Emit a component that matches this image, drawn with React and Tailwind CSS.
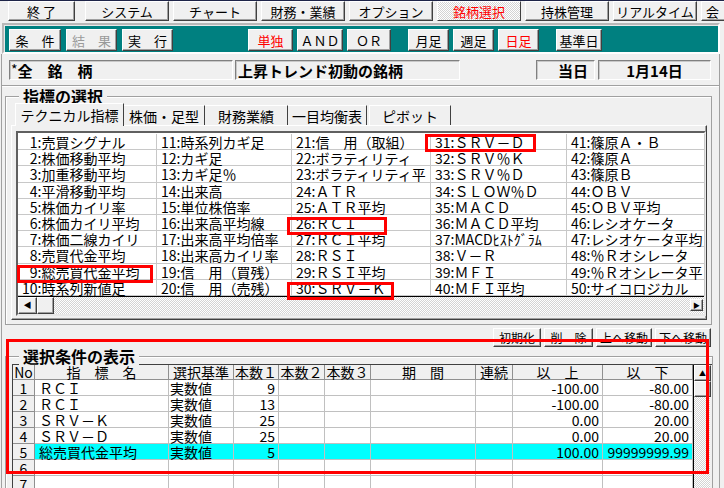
import React from 'react';

const raised =
  'shrink-0 bg-[#f0f0f0] border border-t-white border-l-white border-r-[#404040] border-b-[#404040] shadow-[inset_-1px_-1px_0_#a0a0a0]';
const sunken =
  'shrink-0 border border-t-[#808080] border-l-[#808080] border-r-white border-b-white shadow-[inset_1px_1px_0_#c8c8c8]';
const dither =
  'bg-[image:repeating-conic-gradient(#ffffff_0_25%,#d4d4d4_0_50%)] bg-[length:2px_2px]';

const menuItems = ['システム', 'チャート', '財務・業績', 'オプション'];
const menuItems2 = ['持株管理', 'リアルタイム'];

const listCols = [
  ['1:売買シグナル', '2:株価移動平均', '3:加重移動平均', '4:平滑移動平均', '5:株価カイリ率', '6:株価カイリ平均', '7:株価二線カイリ', '8:売買代金平均', '9:総売買代金平均', '10:時系列新値足'],
  ['11:時系列カギ足', '12:カギ足', '13:カギ足％', '14:出来高', '15:単位株倍率', '16:出来高平均線', '17:出来高平均倍率', '18:出来高カイリ率', '19:信　用（買残）', '20:信　用（売残）'],
  ['21:信　用（取組）', '22:ボラティリティ', '23:ボラティリティ平', '24:ＡＴＲ', '25:ＡＴＲ平均', '26:ＲＣＩ', '27:ＲＣＩ平均', '28:ＲＳＩ', '29:ＲＳＩ平均', '30:ＳＲＶ－Ｋ'],
  ['31:ＳＲＶ－Ｄ', '32:ＳＲＶ％Ｋ', '33:ＳＲＶ％Ｄ', '34:ＳＬＯＷ％Ｄ', '35:ＭＡＣＤ', '36:ＭＡＣＤ平均', '37:MACDﾋｽﾄｸﾞﾗﾑ', '38:Ｖ－Ｒ', '39:ＭＦＩ', '40:ＭＦＩ平均'],
  ['41:篠原Ａ・Ｂ', '42:篠原Ａ', '43:篠原Ｂ', '44:ＯＢＶ', '45:ＯＢＶ平均', '46:レシオケータ', '47:レシオケータ平均', '48:％Ｒオシレータ', '49:％Ｒオシレータ平', '50:サイコロジカル'],
];

const headers = ['No', '指　標　名', '選択基準', '本数１', '本数２', '本数３', '期　間', '連続', '以　上', '以　下'];

const rows = [
  { no: 1, name: 'ＲＣＩ', kind: '実数値', n1: '9', lo: '-100.00', hi: '-80.00' },
  { no: 2, name: 'ＲＣＩ', kind: '実数値', n1: '13', lo: '-100.00', hi: '-80.00' },
  { no: 3, name: 'ＳＲＶ－Ｋ', kind: '実数値', n1: '25', lo: '0.00', hi: '20.00' },
  { no: 4, name: 'ＳＲＶ－Ｄ', kind: '実数値', n1: '25', lo: '0.00', hi: '20.00' },
  { no: 5, name: '総売買代金平均', kind: '実数値', n1: '5', lo: '100.00', hi: '99999999.99', sel: true },
  { no: 6 },
  { no: 7 },
];

function Btn({ children, className = '' }) {
  return <div className={`flex items-center justify-center whitespace-nowrap ${raised} ${className}`}>{children}</div>;
}

function ListLabel({ text, first }) {
  const i = text.indexOf(':');
  const num = text.slice(0, i);
  return (
    <>
      {first && num.length === 1 && <span className="invisible">0</span>}
      {num}:{text.slice(i + 1)}
    </>
  );
}

export default function App() {
  return (
    <div className="relative w-[724px] h-[488px] overflow-hidden bg-[#f0f0f0] text-black font-['Noto_Sans_CJK_JP',sans-serif]">
      <div className="h-[1px] bg-[#1e2448]" />

      {/* Menu bar */}
      <div className="flex h-[21px] pl-[8px] gap-[4px] items-start text-[13px] leading-none">
        <Btn className="w-[67px] h-[20px] mr-[6px]">終 了</Btn>
        {menuItems.map((m) => (
          <Btn key={m} className="w-[84px] h-[20px]">{m}</Btn>
        ))}
        <div className={`shrink-0 w-[84px] h-[20px] flex items-center justify-center text-[#ff0000] border border-t-white border-l-white border-r-[#404040] border-b-[#404040] ${dither}`}>
          銘柄選択
        </div>
        {menuItems2.map((m) => (
          <Btn key={m} className="w-[84px] h-[20px]">{m}</Btn>
        ))}
        <Btn className="w-[84px] h-[20px] justify-start pl-[4px]">会</Btn>
      </div>

      {/* Teal tool bar */}
      <div className="ml-[2px] mt-[1px] w-[718px] h-[31px] border-2 border-t-[#b8b8b8] border-l-[#b8b8b8] border-r-white border-b-white bg-[#008080] shadow-[inset_1px_1px_0_#e8e8e8]">
        <div className="flex items-start pt-[4px] pl-[5px] text-[13px] leading-none">
          <Btn className="w-[52px] h-[22px]">条　件</Btn>
          <Btn className="w-[51px] h-[22px] ml-[5px] text-[#9a9a9a]">結　果</Btn>
          <Btn className="w-[51px] h-[22px] ml-[5px]">実　行</Btn>
          <Btn className="w-[45px] h-[22px] ml-[75px] text-[#ff0000]">単独</Btn>
          <Btn className="w-[46px] h-[22px] ml-[4px]">ＡＮＤ</Btn>
          <Btn className="w-[44px] h-[22px] ml-[4px]">ＯＲ</Btn>
          <Btn className="w-[41px] h-[22px] ml-[17px]">月足</Btn>
          <Btn className="w-[41px] h-[22px] ml-[4px]">週足</Btn>
          <Btn className="w-[41px] h-[22px] ml-[4px] text-[#ff0000]">日足</Btn>
          <Btn className="w-[46px] h-[22px] ml-[17px]">基準日</Btn>
        </div>
      </div>

      {/* Main area */}
      <div className="ml-[1px] w-[719px] h-[434px] border-l border-r border-[#a0a0a0]">
        {/* Selected info row */}
        <div className="flex items-start pt-[6px] text-[15px] font-bold leading-none">
          <div className={`${sunken} ml-[7px] w-[224px] h-[20px] flex items-center pl-[1px] whitespace-nowrap`}>
            <span className="text-[14px] font-normal self-start mt-[1px]">*</span>全　銘　柄
          </div>
          <div className={`${sunken} ml-[2px] w-[225px] h-[20px] flex items-center pl-[2px] whitespace-nowrap`}>
            上昇トレンド初動の銘柄
          </div>
          <div className={`${sunken} ml-[76px] w-[59px] h-[20px] flex items-center justify-end pr-[6px]`}>当日</div>
          <div className={`${sunken} ml-[3px] w-[113px] h-[20px] flex items-center justify-center`}>1月14日</div>
        </div>
        <div className="mt-[5px] h-[2px] border-t border-t-[#a0a0a0] border-b border-b-white" />

        {/* 指標の選択 group */}
        <div className="relative mt-[9px] ml-[3px] w-[707px] h-[229px] border border-[#a0a0a0] shadow-[inset_1px_1px_0_#ffffff]">
          <div className="absolute left-[13px] top-[-10px] px-[4px] bg-[#f0f0f0] text-[16px] font-bold leading-[18px]">指標の選択</div>

          {/* tabs */}
          <div className="flex items-end h-[28px] pl-[9px] text-[14px] leading-none">
            <div className="shrink-0 h-[23px] w-[109px] flex items-center justify-center border border-b-0 border-t-white border-l-white border-r-[#404040] bg-[#f0f0f0] relative z-10 mb-[-1px]">
              テクニカル指標
            </div>
            <div className="shrink-0 h-[20px] w-[81px] flex items-center justify-center border-t border-t-white border-r border-r-[#404040]">株価・足型</div>
            <div className="shrink-0 h-[20px] w-[83px] flex items-center justify-center border-t border-t-white border-r border-r-[#404040]">財務業績</div>
            <div className="shrink-0 h-[20px] w-[79px] flex items-center justify-center border-t border-t-white border-r border-r-[#404040]">一目均衡表</div>
            <div className="shrink-0 h-[20px] w-[82px] ml-[2px] flex items-center justify-center border-t border-t-white border-l border-l-white border-r border-r-[#404040]">ピボット</div>
          </div>

          {/* tab panel */}
          <div className="ml-[5px] w-[696px] h-[195px] border border-t-white border-l-white border-r-[#404040] border-b-[#404040] shadow-[inset_-1px_-1px_0_#a0a0a0] pt-[5px] pl-[4px]">
            <div className="w-[690px] h-[185px] border-2 border-t-[#606060] border-l-[#606060] border-r-[#e8e8e8] border-b-[#e8e8e8] bg-white flex flex-col">
              <div className="grid grid-cols-[139px_135px_139px_136px_138px] text-[14px] leading-[16px] pt-[1px]">
                {Array.from({ length: 10 }).map((_, r) =>
                  listCols.map((col, c) => (
                    <div
                      key={`${r}-${c}`}
                      className="h-[16.2px] pl-[4px] border-r border-b border-[#c8c8c8] whitespace-nowrap overflow-x-clip"
                    >
                      <ListLabel text={col[r]} first={c === 0} />
                    </div>
                  ))
                )}
              </div>
              <div className="h-[1px] bg-black" />
              <div className={`flex-1 flex items-center ${dither}`}>
                <Btn className="w-[19px] h-[17px]">
                  <span className="text-[8px] leading-none">◀</span>
                </Btn>
                <Btn className="w-[17px] h-[17px]" />
                <div className="flex-1" />
                <Btn className="w-[13px] h-[12px] mr-[1px]">
                  <span className="text-[7px] leading-none">▶</span>
                </Btn>
              </div>
            </div>
          </div>
        </div>

        {/* buttons */}
        <div className="flex justify-end gap-[3px] mt-[3px] w-[709px] h-[19px] text-[12px] leading-none">
          <Btn className="w-[48px] h-[19px]">初期化</Btn>
          <Btn className="w-[49px] h-[19px]">削　除</Btn>
          <Btn className="w-[56px] h-[19px]">上へ移動</Btn>
          <Btn className="w-[56px] h-[19px]">下へ移動</Btn>
        </div>

        {/* 選択条件の表示 group */}
        <div className="relative mt-[9px] ml-[3px] w-[708px] h-[140px] border border-b-0 border-[#a0a0a0] shadow-[inset_1px_1px_0_#ffffff]">
          <div className="absolute left-[13px] top-[-10px] px-[4px] bg-[#f0f0f0] text-[16px] font-bold leading-[18px]">選択条件の表示</div>
          <div className="flex mt-[7px] ml-[6px] border-t border-l border-[#404040]">
            <div className="grid grid-cols-[22px_134px_65px_45px_46px_46px_105px_37px_90px_90px] text-[14px] leading-[15px]">
              {headers.map((h) => (
                <div key={h} className="h-[15px] border-r border-b border-[#909090] bg-[#f0f0f0] text-center whitespace-nowrap overflow-x-clip">
                  {h}
                </div>
              ))}
              {rows.map((r) => {
                const cell = `h-[16px] border-r border-b border-[#c0c0c0] whitespace-nowrap overflow-x-clip leading-[16px] ${r.sel ? 'bg-[#00ffff]' : 'bg-white'}`;
                return (
                  <React.Fragment key={r.no}>
                    <div className="h-[16px] border-r border-b border-[#909090] bg-[#f0f0f0] text-center leading-[16px]">{r.no}</div>
                    <div className={`${cell} pl-[4px]`}>{r.name}</div>
                    <div className={`${cell} pl-[1px]`}>{r.kind}</div>
                    <div className={`${cell} text-right pr-[3px]`}>{r.n1}</div>
                    <div className={cell} />
                    <div className={cell} />
                    <div className={cell} />
                    <div className={cell} />
                    <div className={`${cell} text-right pr-[3px]`}>{r.lo}</div>
                    <div className={`${cell} text-right pr-[3px]`}>{r.hi}</div>
                  </React.Fragment>
                );
              })}
            </div>
            <div className={`w-[17px] flex flex-col ${dither} border-l border-black`}>
              <Btn className="w-[17px] h-[16px]">
                <span className="text-[7px] leading-none">▲</span>
              </Btn>
              <Btn className="w-[17px] h-[16px]" />
            </div>
          </div>
        </div>
      </div>

      {/* red highlight marks */}
      <div className="absolute left-[425px] top-[134px] w-[111px] h-[18px] border-[3px] border-[#ff0000]" />
      <div className="absolute left-[287px] top-[217px] w-[100px] h-[18px] border-[3px] border-[#ff0000]" />
      <div className="absolute left-[17px] top-[265px] w-[136px] h-[18px] border-[3px] border-[#ff0000]" />
      <div className="absolute left-[287px] top-[282px] w-[107px] h-[18px] border-[3px] border-[#ff0000]" />
      <div className="absolute left-[6px] top-[339px] w-[703px] h-[135px] border-[3px] border-[#ff0000]" />
    </div>
  );
}
